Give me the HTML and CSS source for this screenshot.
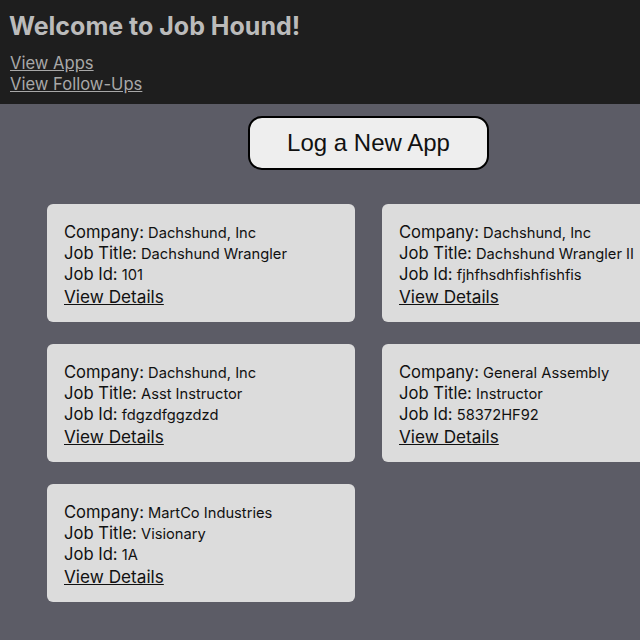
FILE: index.html
```html
<!DOCTYPE html>
<html lang="en">
<head>
  <meta charset="UTF-8" />
  <meta name="viewport" content="width=device-width, initial-scale=1.0"/>
  <title>Job Hound</title>
  <link rel="stylesheet" href="styles.css">
</head>
<body>

<header class="top-bar">
  <h1 class="site-title">Welcome to Job Hound!</h1>
  <nav class="nav-links">
    <a href="#">View Apps</a>
    <a href="#">View Follow-Ups</a>
  </nav>
</header>

<main class="apps">
  <button class="new-app">Log a New App</button>

  <div class="app-list">
    <div class="app-card">
      <div><span class="label">Company:</span> Dachshund, Inc</div>
      <div><span class="label">Job Title:</span> Dachshund Wrangler</div>
      <div><span class="label">Job Id:</span> 101</div>
      <a href="#" class="details">View Details</a>
    </div>
    <div class="app-card">
      <div><span class="label">Company:</span> Dachshund, Inc</div>
      <div><span class="label">Job Title:</span> Dachshund Wrangler II</div>
      <div><span class="label">Job Id:</span> fjhfhsdhfishfishfis</div>
      <a href="#" class="details">View Details</a>
    </div>
    <div class="app-card">
      <div><span class="label">Company:</span> Dachshund, Inc</div>
      <div><span class="label">Job Title:</span> Asst Instructor</div>
      <div><span class="label">Job Id:</span> fdgzdfggzdzd</div>
      <a href="#" class="details">View Details</a>
    </div>
    <div class="app-card">
      <div><span class="label">Company:</span> General Assembly</div>
      <div><span class="label">Job Title:</span> Instructor</div>
      <div><span class="label">Job Id:</span> 58372HF92</div>
      <a href="#" class="details">View Details</a>
    </div>
    <div class="app-card">
      <div><span class="label">Company:</span> MartCo Industries</div>
      <div><span class="label">Job Title:</span> Visionary</div>
      <div><span class="label">Job Id:</span> 1A</div>
      <a href="#" class="details">View Details</a>
    </div>
  </div>
</main>

</body>
</html>
```

FILE: styles.css
```css
body {
  font-family: Inter, "Noto Sans", sans-serif;
  background: #5c5c66;
  margin: 0;
  overflow: hidden;
}
.top-bar {
  background: #1e1e1e;
  padding: 10px 10px 11px;
  height: 83px;
}
.site-title {
  margin: 0 0 0 -1px;
  font-size: 25px;
  font-weight: bold;
  color: #bbbbbb;
  line-height: 32px;
}
.nav-links {
  margin-top: 11px;
  display: flex;
  flex-direction: column;
  align-items: flex-start;
}
.nav-links a {
  color: #a8a8a8;
  font-size: 16.6px;
  line-height: 21px;
}
.apps {
  width: 737px;
  display: flex;
  flex-direction: column;
  align-items: center;
}
.new-app {
  margin-top: 12px;
  width: 241px;
  height: 54px;
  font-family: "Liberation Sans", Arial, sans-serif;
  font-size: 24px;
  background: #eeeeee;
  color: #111;
  border: 2px solid #000;
  border-radius: 14px;
  cursor: pointer;
}
.app-list {
  margin-top: 34px;
  display: grid;
  grid-template-columns: repeat(2, 308px);
  gap: 22px 27px;
}
.app-card {
  background: #dcdcdc;
  border-radius: 6px;
  padding: 19px 17px 15px;
  height: 84px;
  font-size: 14.7px;
  line-height: 21px;
  color: #111;
}
.label {
  font-size: 16.6px;
  line-height: 16px;
}
.details {
  display: block;
  font-size: 17.2px;
  line-height: 21px;
  color: #111;
}
```
